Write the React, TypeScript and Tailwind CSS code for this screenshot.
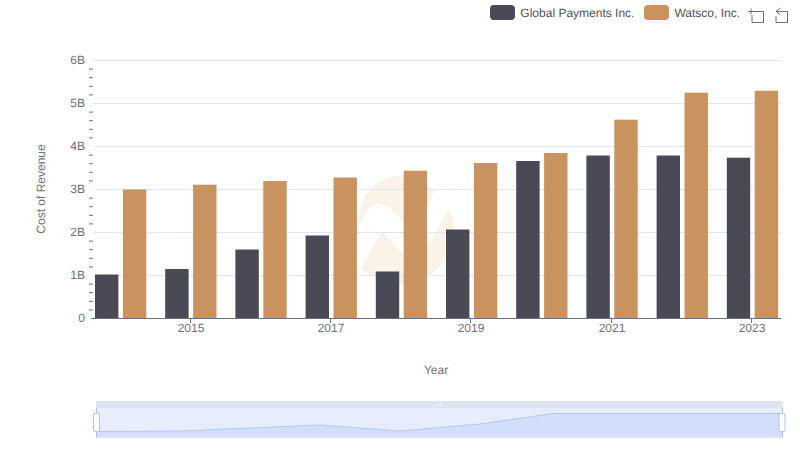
const FONT = "font-['Liberation_Sans',Arial,sans-serif]";

// one row per year: bar tops in px
const bars = [
  { x: 95, dark: 274.5, tan: 189.5 },
  { x: 165.2, dark: 269, tan: 184.7 },
  { x: 235.4, dark: 249.5, tan: 181 },
  { x: 305.6, dark: 235.5, tan: 177.5 },
  { x: 375.8, dark: 271.5, tan: 170.7 },
  { x: 446, dark: 229.5, tan: 163 },
  { x: 516.2, dark: 161, tan: 153 },
  { x: 586.4, dark: 155.5, tan: 119.7 },
  { x: 656.6, dark: 155.5, tan: 92.7 },
  { x: 726.8, dark: 157.7, tan: 90.7 },
];

const yLabels = ["6B", "5B", "4B", "3B", "2B", "1B"];
const xLabels = [
  { x: 191, label: "2015" },
  { x: 331, label: "2017" },
  { x: 471, label: "2019" },
  { x: 612, label: "2021" },
  { x: 752, label: "2023" },
];

const Chart = () => (
  <svg width="800" height="461" className="block">
    {/* watermark */}
    <path
      d="M357 228C358 195 375 176 403 176C415 176 426 183 435 191L414 228L403 222C396 213 388 204 378 204C369 204 363 218 357 232Z"
      fill="#fbf3e8"
    />
    <path
      d="M382 231L361 269C372 277 386 285 403 285C428 285 454 258 454 228C454 222 452 215 449 209L415 268Z"
      fill="#fbf3e8"
    />

    {yLabels.map((label, i) => (
      <g key={label}>
        <line x1="93" x2="781" y1={60.5 + i * 43} y2={60.5 + i * 43} stroke="#e0e6f1" />
        <text x="85" y={64 + i * 43} textAnchor="end" fontSize="12" fill="#6e7079">
          {label}
        </text>
      </g>
    ))}
    <text x="85" y="322" textAnchor="end" fontSize="12" fill="#6e7079">
      0
    </text>

    {/* minor ticks */}
    {[0, 1, 2, 3, 4, 5].map((i) =>
      [1, 2, 3, 4].map((j) => (
        <line
          key={`${i}-${j}`}
          x1="89"
          x2="93"
          y1={60.5 + i * 43 + j * 8.6}
          y2={60.5 + i * 43 + j * 8.6}
          stroke="#6e7079"
        />
      ))
    )}

    {bars.map((b) => (
      <g key={b.x}>
        <rect x={b.x} y={b.dark} width="23.4" height={318 - b.dark} fill="#4a4a56" />
        <rect x={b.x + 27.9} y={b.tan} width="23.4" height={318 - b.tan} fill="#c9935f" />
      </g>
    ))}

    <line x1="91" x2="781" y1="318.5" y2="318.5" stroke="#6e7079" />
    {xLabels.map((t) => (
      <g key={t.label}>
        <line x1={t.x - 0.5} x2={t.x - 0.5} y1="318" y2="323" stroke="#6e7079" />
        <text x={t.x} y="332" textAnchor="middle" fontSize="12" fill="#6e7079">
          {t.label}
        </text>
      </g>
    ))}

    <text x="436" y="374" textAnchor="middle" fontSize="12" fill="#6e7079">
      Year
    </text>
    <text
      transform="translate(45 189) rotate(-90)"
      textAnchor="middle"
      fontSize="12"
      fill="#6e7079"
    >
      Cost of Revenue
    </text>

    {/* data zoom */}
    <rect x="96" y="401" width="687" height="7" fill="#dde3f1" />
    <rect x="96" y="408" width="687" height="29" fill="#e7edfd" />
    <path
      d="M96 431.500L180 431L320 425L400 431L480 424L553 413.500L783 413.500V437H96Z"
      fill="#d2dffb"
    />
    <path d="M96 431.500L180 431L320 425L400 431L480 424L553 413.500L783 413.500" fill="none" stroke="#b3c8f5" />
    <rect x="96" y="437" width="687" height="1" fill="#e3e8f7" />
    <line x1="96.500" x2="96.500" y1="408" y2="438" stroke="#b8c2d8" />
    <line x1="782.500" x2="782.500" y1="408" y2="438" stroke="#b8c2d8" />
    <rect x="93.500" y="413.500" width="6" height="18" rx="1.500" fill="#fff" stroke="#b8c2d8" />
    <rect x="779" y="413.500" width="6" height="18" rx="1.500" fill="#fff" stroke="#b8c2d8" />
    <rect x="436" y="403" width="1" height="3" fill="#f3f5fa" />
    <rect x="438" y="403" width="1" height="3" fill="#f3f5fa" />
    <rect x="440" y="403" width="1" height="3" fill="#f3f5fa" />
  </svg>
);

const LegendItem = ({ color, label }: { color: string; label: string }) => (
  <div className="flex items-center gap-[5px]">
    <span className={`h-[15px] w-[25px] rounded-[4px] ${color}`} />
    <span className="text-[12px] leading-none text-[#4f5058]">{label}</span>
  </div>
);

export default function App() {
  return (
    <div className={`relative h-[461px] w-[800px] overflow-hidden bg-white [text-rendering:geometricPrecision] ${FONT}`}>
      <Chart />
      {/* legend + toolbox sit over the chart */}
      <div className="absolute right-[11px] top-[5px] flex h-[15px] items-center">
        <LegendItem color="bg-[#4a4a56]" label="Global Payments Inc." />
        <div className="ml-[10px]">
          <LegendItem color="bg-[#c9935f]" label="Watsco, Inc." />
        </div>
        <svg width="17" height="18" viewBox="0 0 17 18" className="ml-[7px] self-start" fill="none" stroke="#6e7079">
          <path d="M1 6.500H7M4 3.500V9.500M7 6.500H16.500V17.500H5V10" />
        </svg>
        <svg width="14" height="18" viewBox="0 0 14 18" className="ml-[11px] self-start" fill="none" stroke="#6e7079">
          <path d="M1 11V17.500H12.500V6.500H1M5.500 3L1 6.500L5.500 10" />
        </svg>
      </div>
    </div>
  );
}
